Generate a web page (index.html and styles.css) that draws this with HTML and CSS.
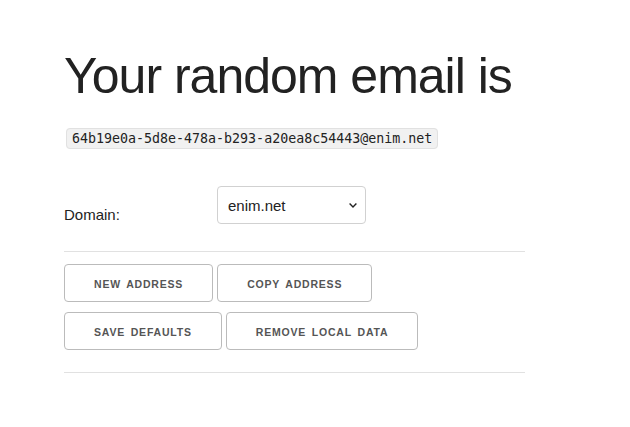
FILE: index.html
```html
<!DOCTYPE html>
<html lang="en">
<head>
<meta charset="utf-8">
<title>Random email</title>
<link rel="stylesheet" href="styles.css">
</head>
<body>
<main class="container">
  <h1 class="title">Your random email is</h1>
  <p class="email"><code class="address">64b19e0a-5d8e-478a-b293-a20ea8c54443@enim.net</code></p>
  <div class="form-row">
    <label class="label" for="domain">Domain:</label>
    <select class="select" id="domain">
      <option>enim.net</option>
    </select>
  </div>
  <hr class="rule rule-top">
  <div class="actions">
    <button class="button" type="button">New address</button>
    <button class="button" type="button">Copy address</button>
    <button class="button" type="button">Save defaults</button>
    <button class="button" type="button">Remove local data</button>
  </div>
  <hr class="rule rule-bottom">
</main>
</body>
</html>
```

FILE: styles.css
```css
html, body {
  margin: 0;
  padding: 0;
  background: #fff;
}

body {
  font-family: "Liberation Sans", Arial, sans-serif;
  font-size: 15px;
  line-height: 24px;
  color: #222;
}

.container {
  width: 461px;
  margin-left: 64px;
  padding-top: 46px;
}

.title {
  margin: 0 0 20px;
  font-size: 50px;
  line-height: 60px;
  font-weight: 300;
  letter-spacing: -1px;
  color: #222;
}

.email {
  margin: 0 0 35px;
}

.address {
  font-family: "DejaVu Sans Mono", "Liberation Mono", monospace;
  font-size: 13.3px;
  padding: 2px 5px;
  margin: 0 2px;
  white-space: nowrap;
  background: #f1f1f1;
  border: 1px solid #e1e1e1;
  border-radius: 4px;
  color: #222;
}

.form-row {
  display: flex;
  align-items: flex-start;
  height: 38px;
}

.label {
  width: 153px;
  padding-top: 17px;
  flex: none;
}

.select {
  appearance: none;
  -webkit-appearance: none;
  width: 149px;
  height: 38px;
  padding: 6px 24px 6px 10px;
  margin: 0;
  font-family: inherit;
  font-size: 15px;
  color: #222;
  background-color: #fff;
  background-image: url("data:image/svg+xml;utf8,<svg xmlns='http://www.w3.org/2000/svg' width='8' height='5' viewBox='0 0 8 5'><path d='M0.6 0.6 L4 4 L7.4 0.6' fill='none' stroke='%23222' stroke-width='1.4'/></svg>");
  background-repeat: no-repeat;
  background-position: right 8px center;
  border: 1px solid #d1d1d1;
  border-radius: 4px;
  box-sizing: border-box;
}

.rule {
  border: 0;
  border-top: 1px solid #e1e1e1;
  height: 0;
  margin: 0;
}

.rule-top {
  margin-top: 27px;
  margin-bottom: 12px;
}

.rule-bottom {
  margin-top: 22px;
}

.actions {
  display: flex;
  flex-wrap: wrap;
  column-gap: 4px;
  row-gap: 10px;
}

.button {
  height: 38px;
  padding: 0 29px;
  margin: 0;
  font-family: "Liberation Sans", Arial, sans-serif;
  font-size: 10.5px;
  font-weight: 700;
  line-height: 38px;
  letter-spacing: 0.8px;
  word-spacing: 2px;
  text-transform: uppercase;
  color: #555;
  background: transparent;
  border: 1px solid #bbb;
  border-radius: 4px;
  box-sizing: border-box;
  white-space: nowrap;
  cursor: pointer;
}
```
